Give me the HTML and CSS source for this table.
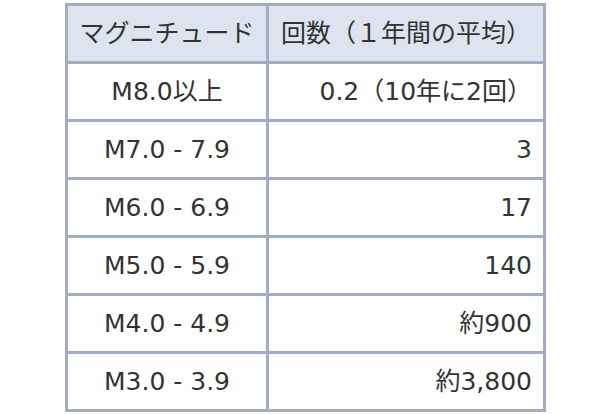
FILE: index.html
```html
<!DOCTYPE html>
<html lang="ja">
<head>
<meta charset="utf-8">
<title>マグニチュード</title>
<link rel="stylesheet" href="styles.css">
</head>
<body>
<table class="quake">
  <thead>
    <tr><th class="c1">マグニチュード</th><th class="c2">回数（１年間の平均）</th></tr>
  </thead>
  <tbody>
    <tr><td class="mag">M8.0以上</td><td class="num">0.2（10年に2回）</td></tr>
    <tr><td class="mag">M7.0 - 7.9</td><td class="num">3</td></tr>
    <tr><td class="mag">M6.0 - 6.9</td><td class="num">17</td></tr>
    <tr><td class="mag">M5.0 - 5.9</td><td class="num">140</td></tr>
    <tr><td class="mag">M4.0 - 4.9</td><td class="num">約900</td></tr>
    <tr><td class="mag">M3.0 - 3.9</td><td class="num">約3,800</td></tr>
  </tbody>
</table>
</body>
</html>
```
FILE: styles.css
```css
html, body {
  margin: 0;
  padding: 0;
  background: #ffffff;
}
body {
  padding: 3px 0 0 65px;
  font-family: "DejaVu Sans", "Noto Sans CJK JP", sans-serif;
  font-size: 25px;
  color: #333333;
}
.quake {
  border-spacing: 0;
  border-top: 3px solid #a3acc5;
  border-left: 3px solid #a3acc5;
}
.quake th,
.quake td {
  box-sizing: border-box;
  height: 58px;
  padding: 0 11px;
  border-right: 3px solid #a3acc5;
  border-bottom: 3px solid #a3acc5;
  font-weight: normal;
  vertical-align: middle;
  white-space: nowrap;
  line-height: 1;
}
.quake th {
  background: #dde3ef;
  text-align: center;
  padding: 0 6px;
}
.c1 { width: 201px; }
.c2 { width: 277px; }
.mag { text-align: center; }
.num { text-align: right; }
```
